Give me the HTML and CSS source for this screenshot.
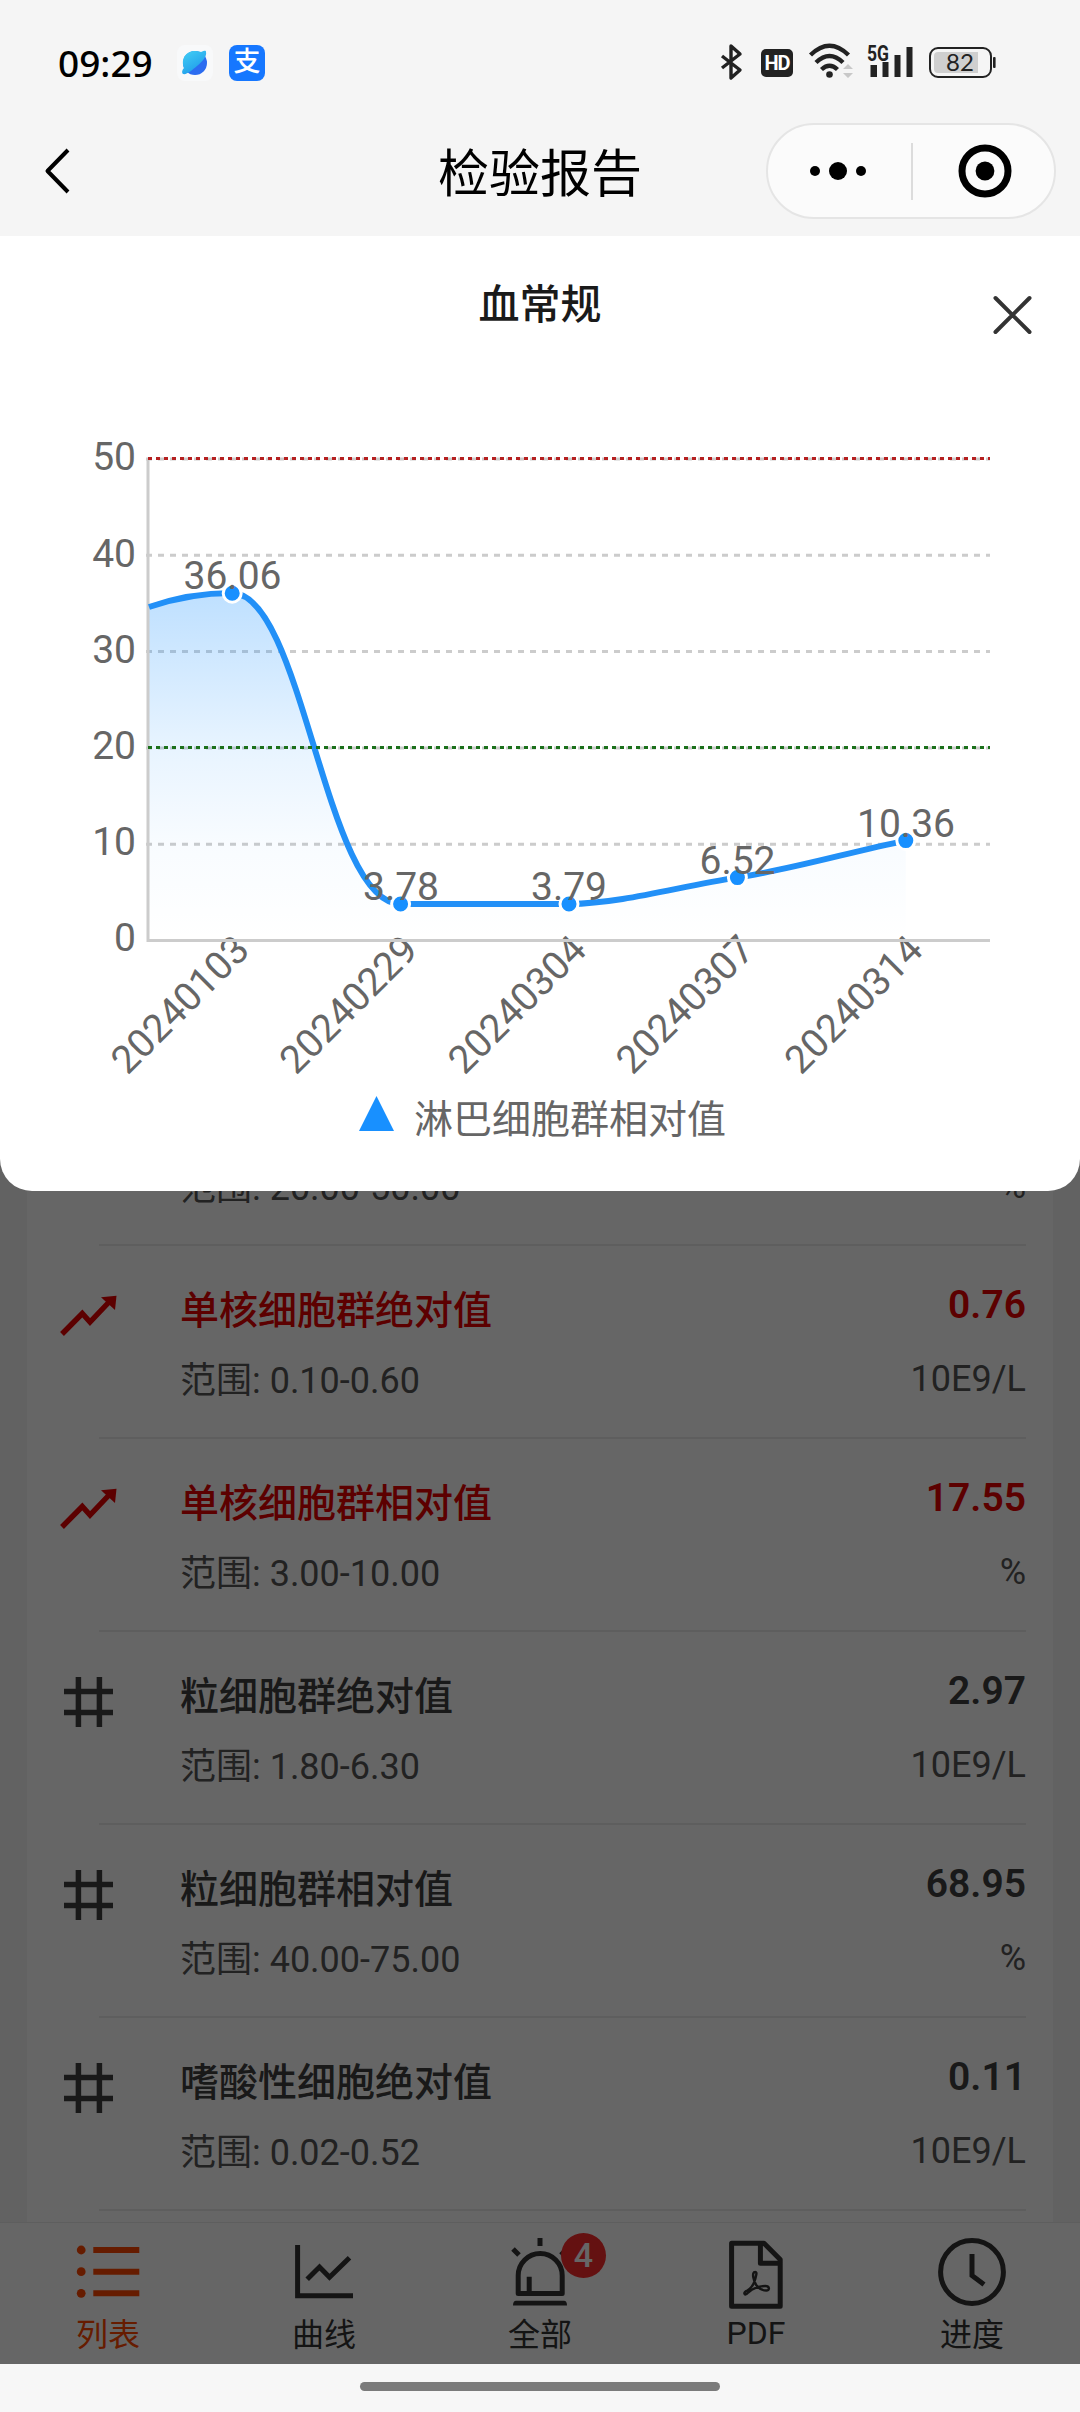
FILE: index.html
```html
<!DOCTYPE html>
<html lang="zh-CN">
<head>
    <meta charset="UTF-8">
    <meta name="viewport" content="width=device-width, initial-scale=1.0">
    <title>检验报告</title>
    <link rel="stylesheet" href="styles.css">
</head>
<body>
    <div class="status-bar">
        <span class="time">09:29</span>
        <svg class="app-icon" width="36" height="36" viewBox="0 0 36 36">
            <defs>
                <linearGradient id="planet" x1="0" y1="0" x2="0.6" y2="1">
                    <stop offset="0" stop-color="#43d0f5"/>
                    <stop offset="1" stop-color="#1f9bea"/>
                </linearGradient>
            </defs>
            <rect width="36" height="36" rx="8" fill="#f8f9fa"/>
            <circle cx="18" cy="18" r="12" fill="#2b6cf0"/>
            <path d="M6 29c-2-2 0-5 1-6C3 12 11 5 19 6c3 0 4 1 5 1 3-1 5-2 5 0 1 4-3 9-9 14-5 4-10 9-14 8Z" fill="url(#planet)"/>
        </svg>
        <span class="alipay">支</span>
        <div class="status-icons">
            <svg width="24" height="40" viewBox="0 0 24 40">
                <path d="M1 14 19 28 10 36V4l9 8L1 26" fill="none" stroke="#222" stroke-width="3.4" stroke-linejoin="round"/>
            </svg>
            <span class="hd">HD</span>
            <svg width="42" height="40" viewBox="0 0 42 40">
                <g fill="none" stroke="#222" stroke-width="4.4">
                    <path d="M1.5 13Q20.5 -5.5 39.5 13"/>
                    <path d="M7 20.5Q20.5 7.5 34 20.5"/>
                    <path d="M12.5 27.5Q20.5 20 28.5 27.5"/>
                </g>
                <circle cx="20.5" cy="32.500" r="3.3" fill="#222"/>
                <path d="M34 27l5-5 5 5ZM34 31h10l-5 5Z" fill="#c8c8c8"/>
            </svg>
            <svg width="46" height="40" viewBox="0 0 46 40">
                <text x="0" y="18.5" class="net" textLength="22" lengthAdjust="spacingAndGlyphs">5G</text>
                <path d="M3.5 23h6.5v12H3.5ZM15.5 20H21.5v15H15.5ZM27.5 13h6v22h-6ZM39.5 5h6v30h-6Z" fill="#222"/>
            </svg>
            <svg width="67" height="40" viewBox="0 0 67 40">
                <rect x="1" y="6" width="61" height="29" rx="8" fill="none" stroke="#222" stroke-width="2"/>
                <path d="M9 10h40v21H9q-4 0-4-4V14q0-4 4-4Z" fill="#cfcfcf"/>
                <rect x="64" y="15" width="2.6" height="11" rx="1" fill="#222"/>
                <text x="31" y="29" class="battery">82</text>
            </svg>
        </div>
    </div>

    <div class="nav-bar">
        <svg class="back" width="30" height="50" viewBox="0 0 30 50">
            <path d="M26 4 5.5 25 26 46" fill="none" stroke="#000" stroke-width="4" stroke-linejoin="round"/>
        </svg>
        <h1>检验报告</h1>
        <div class="capsule">
            <svg width="56" height="20" viewBox="0 0 56 20">
                <circle cx="5" cy="10" r="5"/>
                <circle cx="28" cy="10" r="9"/>
                <circle cx="51" cy="10" r="5"/>
            </svg>
            <span class="split"></span>
            <svg width="54" height="54" viewBox="0 0 54 54">
                <circle cx="27" cy="27" r="23" fill="none" stroke="#000" stroke-width="7"/>
                <circle cx="27" cy="27" r="9.4"/>
            </svg>
        </div>
    </div>

    <div class="page">
        <div class="list-wrap">
            <div class="list">
                <div class="item first">
                    <div class="main"><p class="range">范围: 20.00-50.00</p></div>
                    <div class="side"><p class="unit">%</p></div>
                </div>
                <div class="item high">
                    <svg class="icon" viewBox="0 0 60 60"><path d="M4 49 24.300 28.5 32 37 52 16" fill="none" stroke="currentColor" stroke-width="5.4"/><path d="M43 12.3 58.5 10.7 57 25Z" fill="currentColor"/></svg>
                    <div class="main"><p class="name">单核细胞群绝对值</p><p class="range">范围: 0.10-0.60</p></div>
                    <div class="side"><p class="value">0.76</p><p class="unit">10E9/L</p></div>
                </div>
                <div class="item high">
                    <svg class="icon" viewBox="0 0 60 60"><path d="M4 49 24.300 28.5 32 37 52 16" fill="none" stroke="currentColor" stroke-width="5.4"/><path d="M43 12.3 58.5 10.7 57 25Z" fill="currentColor"/></svg>
                    <div class="main"><p class="name">单核细胞群相对值</p><p class="range">范围: 3.00-10.00</p></div>
                    <div class="side"><p class="value">17.55</p><p class="unit">%</p></div>
                </div>
                <div class="item">
                    <svg class="icon" viewBox="0 0 60 60"><path d="M20.4 6v50M41.4 6v50M6 20.4h49M6 41.6h49" fill="none" stroke="currentColor" stroke-width="5.5"/></svg>
                    <div class="main"><p class="name">粒细胞群绝对值</p><p class="range">范围: 1.80-6.30</p></div>
                    <div class="side"><p class="value">2.97</p><p class="unit">10E9/L</p></div>
                </div>
                <div class="item">
                    <svg class="icon" viewBox="0 0 60 60"><path d="M20.4 6v50M41.4 6v50M6 20.4h49M6 41.6h49" fill="none" stroke="currentColor" stroke-width="5.5"/></svg>
                    <div class="main"><p class="name">粒细胞群相对值</p><p class="range">范围: 40.00-75.00</p></div>
                    <div class="side"><p class="value">68.95</p><p class="unit">%</p></div>
                </div>
                <div class="item">
                    <svg class="icon" viewBox="0 0 60 60"><path d="M20.4 6v50M41.4 6v50M6 20.4h49M6 41.6h49" fill="none" stroke="currentColor" stroke-width="5.5"/></svg>
                    <div class="main"><p class="name">嗜酸性细胞绝对值</p><p class="range">范围: 0.02-0.52</p></div>
                    <div class="side"><p class="value">0.11</p><p class="unit">10E9/L</p></div>
                </div>
            </div>
        </div>

        <div class="tab-bar">
            <div class="tab active">
                <svg viewBox="0 0 80 80">
                    <g fill="currentColor" stroke="none">
                        <circle cx="13.2" cy="18" r="4.4"/>
                        <circle cx="13.2" cy="39.7" r="4.4"/>
                        <circle cx="13.2" cy="61.3" r="4.4"/>
                    </g>
                    <path d="M25.3 18h46M25.3 39.7h46M25.3 61.3h46" stroke-width="6"/>
                </svg>
                <span>列表</span>
            </div>
            <div class="tab">
                <svg viewBox="0 0 80 80"><path d="M13.6 13V63.8H69M23.2 47.3 35.5 35 45.5 45.3 65.5 25.7"/></svg>
                <span>曲线</span>
            </div>
            <div class="tab">
                <svg viewBox="0 0 80 80">
                    <path d="M18.2 61.5V43.5a22 22 0 0 1 44 0V61.5ZM29.2 44.7V61M40 6v8M13 17l6 6M67 17l-6 6" stroke-linejoin="round"/>
                    <path d="M13 73.5q0-4.7 3-4.7h48q3 0 3 4.7Z" fill="currentColor" stroke="none"/>
                </svg>
                <span>全部</span>
                <b class="badge">4</b>
            </div>
            <div class="tab">
                <svg viewBox="0 0 80 80">
                    <path d="M15.6 11.2H48L64.2 27.5V74.3H15.6ZM44.4 11.2V31.3H64" stroke-linejoin="round"/>
                    <path d="M39.2 40c-4 0-1.5 9 1 13 3 4 7 5.5 10 5.5 4 0 3.5-4.5-1-4.5-8 0-13 3-17 6.5-4 4.5-5.5 0-1-2 6-3 8-10 9-15.5.5-2 .3-3-1-3Z" stroke-width="2.4"/>
                </svg>
                <span class="en">PDF</span>
            </div>
            <div class="tab">
                <svg viewBox="0 0 80 80"><circle cx="40" cy="40" r="31.4"/><path d="M40 22V43.5L52 52.5"/></svg>
                <span>进度</span>
            </div>
        </div>

        <div class="mask"></div>

        <div class="popup">
            <div class="popup-head">
                <h2>血常规</h2>
                <svg class="close" width="44" height="44" viewBox="0 0 44 44"><path d="M4.5 5 38.500 39M38.5 5 4.5 39" stroke="#333" stroke-width="4" stroke-linecap="round"/></svg>
            </div>
            <svg class="chart" width="1080" height="791" viewBox="0 400 1080 791">
                <defs>
                    <linearGradient id="area" gradientUnits="userSpaceOnUse" x1="0" y1="593" x2="0" y2="940">
                        <stop offset="0" stop-color="#1890ff" stop-opacity="0.28"/>
                        <stop offset="0.45" stop-color="#1890ff" stop-opacity="0.1"/>
                        <stop offset="0.72" stop-color="#1890ff" stop-opacity="0.03"/>
                        <stop offset="1" stop-color="#1890ff" stop-opacity="0"/>
                    </linearGradient>
                </defs>
                <!-- grid -->
                <g stroke="#ccc" stroke-width="3" stroke-dasharray="6 6">
                    <path d="M146 459H990"/>
                    <path d="M146 555.3H990"/>
                    <path d="M146 651.6H990"/>
                    <path d="M146 748H990"/>
                    <path d="M146 844.3H990"/>
                </g>
                <g class="y-axis">
                    <text x="136" y="470">50</text>
                    <text x="136" y="566.5">40</text>
                    <text x="136" y="662.5">30</text>
                    <text x="136" y="758.5">20</text>
                    <text x="136" y="855">10</text>
                    <text x="136" y="951">0</text>
                </g>
                <g class="x-axis">
                    <text transform="translate(251.5 952) rotate(-45)">20240103</text>
                    <text transform="translate(420 952) rotate(-45)">20240229</text>
                    <text transform="translate(588.5 952) rotate(-45)">20240304</text>
                    <text transform="translate(756.500 952) rotate(-45)">20240307</text>
                    <text transform="translate(925 952) rotate(-45)">20240314</text>
                </g>
                <!-- area + line -->
                <path fill="url(#area)" d="M148 607C178 597 205 593 232 593C303 593 325 904 400.6 904L569 904C625 903 680 886 737.4 877.6C793 869 850 852 905.8 840.6V940H148Z"/>
                <path d="M148 459V942M147 940.5H990" fill="none" stroke="#ccc" stroke-width="3"/>
                <path fill="none" stroke="#2290f7" stroke-width="6" d="M149 607C178 597 205 593 232 593C303 593 325 904 400.6 904L569 904C625 903 680 886 737.4 877.6C793 869 850 852 905.8 840.6"/>
                <g fill="#1890ff" stroke="#fff" stroke-width="3">
                    <circle cx="232.2" cy="593.2" r="9"/>
                    <circle cx="400.6" cy="904" r="9"/>
                    <circle cx="569" cy="904" r="9"/>
                    <circle cx="737.4" cy="877.6" r="9"/>
                    <circle cx="905.8" cy="840.6" r="9"/>
                </g>
                <!-- reference range -->
                <path d="M148 458.5H990" stroke="#b52020" stroke-width="3" stroke-dasharray="4 4"/>
                <path d="M148 747.5H990" stroke="#1b701b" stroke-width="3" stroke-dasharray="4 4"/>
                <g class="point-label">
                    <text x="232.5" y="589">36.06</text>
                    <text x="401" y="900">3.78</text>
                    <text x="569" y="900">3.79</text>
                    <text x="737.5" y="874">6.52</text>
                    <text x="906" y="837">10.36</text>
                </g>
                <path d="M376.5 1096 394 1131H359Z" fill="#1890ff"/>
                <text class="legend" x="414" y="1133">淋巴细胞群相对值</text>
            </svg>
        </div>
    </div>

    <div class="home-bar"><span></span></div>
</body>
</html>
```
FILE: styles.css
```css
* {
    box-sizing: border-box;
}
body {
    margin: 0;
    width: 1080px;
    height: 2412px;
    overflow: hidden;
    display: flex;
    flex-direction: column;
    background: #f5f5f5;
    font-family: Roboto, "Noto Sans CJK SC", sans-serif;
}
h1, h2, p {
    margin: 0;
    font-weight: 400;
}
svg {
    display: block;
    flex-shrink: 0;
    overflow: visible;
}

/* status bar */
.status-bar {
    height: 123px;
    display: flex;
    align-items: flex-start;
    padding: 42px 84px 0 58px;
}
.time {
    width: 119px;
    font: 500 37px/41px "Noto Sans", sans-serif;
}
.app-icon {
    margin-top: 3px;
}
.alipay {
    width: 36px;
    height: 36px;
    margin: 3px 0 0 16px;
    border-radius: 8px;
    background: #1677ff;
    color: #fff;
    font-size: 27px;
    font-weight: 500;
    line-height: 34px;
    text-align: center;
}
.status-icons {
    margin-left: auto;
    display: flex;
    gap: 16px;
}
.hd {
    width: 32px;
    height: 28px;
    margin-top: 7px;
    border-radius: 5px;
    background: #222;
    color: #fff;
    font: 700 20px/29px "Liberation Sans Narrow", Roboto, sans-serif;
    text-align: center;
    letter-spacing: -1px;
}
.net {
    font: 700 22px Roboto, sans-serif;
    fill: #222;
}
.battery {
    font: 400 24px Lato, sans-serif;
    fill: #222;
    text-anchor: middle;
}

/* nav bar */
.nav-bar {
    height: 113px;
    flex-shrink: 0;
    display: grid;
    grid-template-columns: 1fr auto 1fr;
    align-items: start;
    padding: 0 24px 0 42px;
}
.back {
    margin-top: 23px;
}
.nav-bar h1 {
    margin: 16px 0 0 -18px;
    font-size: 51px;
    line-height: 72px;
}
.capsule {
    justify-self: end;
    width: 290px;
    height: 96px;
    display: flex;
    align-items: center;
    justify-content: space-between;
    padding: 0 42px;
    border: 2px solid #e5e5e5;
    border-radius: 48px;
    background: #fbfbfb;
}
.split {
    width: 2px;
    height: 57px;
    background: #dcdcdc;
}

/* report list */
.page {
    position: relative;
    height: 2128px;
    flex-shrink: 0;
    display: flex;
    flex-direction: column;
}
.list-wrap {
    flex: 1;
    display: flex;
    padding: 0 27px;
    overflow: hidden;
}
.list {
    flex: 1;
    display: flex;
    flex-direction: column;
    justify-content: flex-end;
    padding: 0 27px 11px 31px;
    background: #fff;
}
.item {
    position: relative;
    height: 193px;
    flex-shrink: 0;
    display: flex;
    color: #404040;
}
.item::after {
    content: "";
    position: absolute;
    left: 41px;
    right: 0;
    bottom: 0;
    height: 2px;
    background: #ececec;
}
.item.high {
    color: #e60000;
}
.item .icon {
    width: 60px;
    height: 60px;
    margin-top: 39px;
}
.main {
    flex: 1;
    padding: 37px 0 0 62px;
}
.first .main {
    padding: 107px 0 0 122px;
}
.side {
    padding-top: 35px;
    text-align: right;
}
.first .side {
    padding-top: 102px;
}
.name {
    font-size: 39px;
    line-height: 56px;
    font-weight: 500;
}
.range {
    margin-top: 14px;
    font-size: 36px;
    line-height: 56px;
    color: #555;
}
.first .range {
    margin-top: 0;
}
.value {
    font-size: 39px;
    line-height: 48px;
    font-weight: 600;
}
.unit {
    margin-top: 26px;
    font-size: 36px;
    line-height: 48px;
    color: #555;
}
.first .unit {
    margin-top: 7px;
}

/* bottom tabs */
.tab-bar {
    height: 142px;
    display: flex;
    border-top: 1px solid #ebebeb;
    background: #fff;
}
.tab {
    position: relative;
    flex: 1;
    display: flex;
    flex-direction: column;
    align-items: center;
    padding-top: 9px;
    font-size: 32px;
    line-height: 47px;
    color: #333;
}
.tab .en {
    line-height: 42px;
}
.tab svg {
    width: 80px;
    height: 80px;
    fill: none;
    stroke: currentColor;
    stroke-width: 5;
}
.tab.active {
    color: #ff4800;
}
.badge {
    position: absolute;
    left: 129px;
    top: 10px;
    width: 45px;
    height: 45px;
    border-radius: 50%;
    background: #fa2c2c;
    color: #fff;
    font-size: 34px;
    font-weight: 500;
    line-height: 45px;
    text-align: center;
}

/* trend popup */
.mask {
    position: absolute;
    inset: 0;
    background: rgba(0, 0, 0, 0.6);
}
.popup {
    position: absolute;
    left: 0;
    top: 0;
    width: 1080px;
    height: 955px;
    border-radius: 0 0 32px 32px;
    background: #fff;
}
.popup-head {
    height: 164px;
    display: grid;
    grid-template-columns: 1fr auto 1fr;
    padding: 39px 45px 0;
}
.popup-head h2 {
    grid-column: 2;
    font-size: 41px;
    line-height: 60px;
    font-weight: 500;
    color: #1a1a1a;
}
.close {
    justify-self: end;
    margin-top: 18px;
}
.chart {
    font-size: 39px;
}
.chart text {
    fill: #666;
}
.y-axis, .x-axis {
    text-anchor: end;
}
.point-label {
    text-anchor: middle;
}

/* gesture bar */
.home-bar {
    flex: 1;
    padding-top: 18px;
    background: #f7f7f7;
}
.home-bar span {
    display: block;
    width: 360px;
    height: 9px;
    margin: 0 auto;
    border-radius: 5px;
    background: #7b7b7b;
}
```
